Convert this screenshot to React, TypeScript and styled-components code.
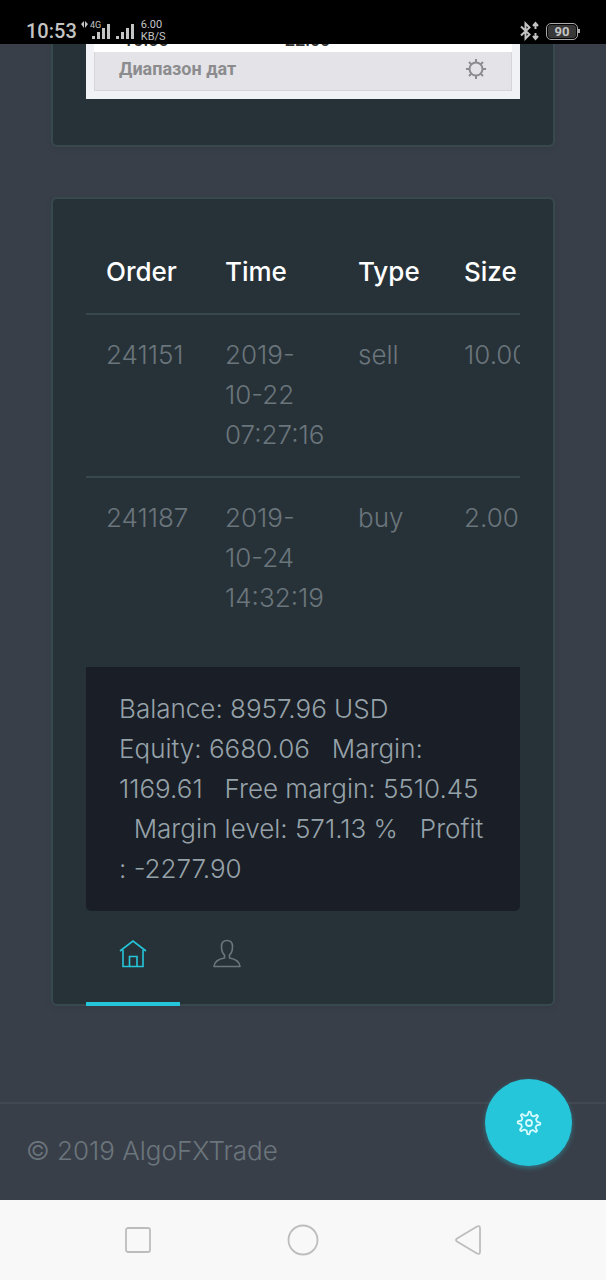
import React from "react";
import styled, { createGlobalStyle } from "styled-components";

const color = {
  page: "#393f49",
  card: "#273238",
  line: "#38494d",
  panel: "#1a1e26",
  accent: "#26c6da",
  muted: "#6b757c",
  soft: "#96a2a9",
};

const GlobalStyle = createGlobalStyle`
  *, *::before, *::after { box-sizing: border-box; }
  body {
    margin: 0;
    background: ${color.page};
    color: ${color.muted};
    font: 300 26px/40px Inter, "Liberation Sans", sans-serif;
  }
  button { border: 0; padding: 0; background: none; font: inherit; color: inherit; cursor: pointer; }
`;

const Screen = styled.div`
  display: flex;
  flex-direction: column;
  min-height: 100vh;
`;

const StatusBar = styled.header`
  display: flex;
  align-items: flex-end;
  justify-content: space-between;
  height: 44px;
  padding: 0 26px 1px;
  background: #000;
  color: #c4c4c4;
  font-family: Roboto, sans-serif;
  font-weight: 400;
`;

const StatusGroup = styled.div`
  display: flex;
  align-items: center;
  height: 24px;
`;

const Clock = styled.time`
  margin-right: 4px;
  font-size: 20px;
  line-height: 24px;
  font-weight: 500;
`;

const Speed = styled.span`
  display: flex;
  flex-direction: column;
  margin-left: 4px;
  font-size: 11px;
  line-height: 12px;
`;

const Battery = styled.span`
  display: flex;
  align-items: center;
  margin-left: 6px;

  &::after {
    content: "";
    width: 2px;
    height: 4px;
    background: #aaa;
  }
`;

const BatteryLevel = styled.span`
  width: 32px;
  height: 17px;
  border: 1px solid #aaa;
  border-radius: 5px;
  background: #383838;
  background-clip: content-box;
  padding: 1px;
  font-size: 13px;
  line-height: 13px;
  font-weight: 700;
  text-align: center;
`;

const Content = styled.main`
  display: flex;
  flex: 1;
  flex-direction: column;
  gap: 50px;
  padding: 0 51px 96px;
`;

const Card = styled.section<{ $continued?: boolean }>`
  padding: ${(p) => (p.$continued ? "0 33px 46px" : "33px 33px 0")};
  border: 2px solid ${color.line};
  border-top-width: ${(p) => (p.$continued ? "0" : "2px")};
  border-radius: ${(p) => (p.$continued ? "0 0 6px 6px" : "6px")};
  background: ${color.card};
  box-shadow: 0 2px 6px rgba(0, 0, 0, 0.08);
`;

const Widget = styled.div`
  padding: 0 8px 8px;
  background: #f0f2f6;
  font-family: Roboto, sans-serif;
`;

const TimeRow = styled.div`
  display: flex;
  align-items: flex-end;
  gap: 116px;
  height: 8px;
  padding: 0 0 3px 29px;
  overflow: hidden;
  background: #fff;
  color: #333;
  font-size: 18px;
  line-height: 18px;
  font-weight: 500;
`;

const RangeButton = styled.button`
  display: flex;
  align-items: center;
  justify-content: space-between;
  width: 100%;
  height: 39px;
  padding: 0 24px 4px;
  border: 1px solid #d6d6da;
  border-top: 0;
  background: #e4e4e8;
  color: #8c8c8f;
  font: 700 18px/24px Roboto, sans-serif;
`;

const TableClip = styled.div`
  overflow: hidden;
`;

const OrdersTable = styled.table`
  width: 466px;
  table-layout: fixed;
  border-spacing: 0;
  text-align: left;
`;

const Column = styled.col<{ $width: number }>`
  width: ${(p) => p.$width}px;
`;

const HeadCell = styled.th`
  padding: 20px 0 21px 20px;
  color: #fff;
  font-weight: 500;
`;

const Cell = styled.td`
  padding: 20px 0 21px 20px;
  border-top: 2px solid ${color.line};
  vertical-align: top;
`;

const Summary = styled.div`
  margin-top: 28px;
  padding: 22px 33px;
  border-radius: 0 0 5px 5px;
  background: ${color.panel};
  color: ${color.soft};
  white-space: pre;
`;

const Tabs = styled.nav`
  display: flex;
  margin-bottom: -2px;
`;

const Tab = styled.button<{ $active?: boolean }>`
  display: flex;
  justify-content: center;
  width: 94px;
  height: 95px;
  padding-top: 28px;
  border-bottom: 4px solid ${(p) => (p.$active ? color.accent : "transparent")};
  color: ${(p) => (p.$active ? color.accent : color.muted)};
`;

const Footer = styled.footer`
  position: relative;
  height: 98px;
  padding: 27px 26px;
  border-top: 2px solid #414852;
`;

const SettingsButton = styled.button`
  position: absolute;
  right: 34px;
  bottom: 34px;
  display: grid;
  place-items: center;
  width: 87px;
  height: 87px;
  border-radius: 50%;
  background: ${color.accent};
  color: #d5fbff;
  box-shadow: 0 2px 5px rgba(38, 198, 218, 0.4);
`;

const SystemNav = styled.nav`
  display: flex;
  align-items: center;
  justify-content: center;
  gap: 133px;
  height: 80px;
  background: #f8f8f8;
  color: #bdbdbd;
`;

const NavButton = styled.button`
  display: grid;
  place-items: center;
  width: 32px;
  height: 32px;
`;

const orders = [
  { id: "241151", time: ["2019-", "10-22", "07:27:16"], type: "sell", size: "10.00" },
  { id: "241187", time: ["2019-", "10-24", "14:32:19"], type: "buy", size: "2.00" },
];

const summary = [
  "Balance: 8957.96 USD",
  "Equity: 6680.06   Margin:",
  "1169.61   Free margin: 5510.45",
  "  Margin level: 571.13 %   Profit",
  ": -2277.90",
];

const cogPath = (() => {
  const teeth = 8;
  const points: string[] = [];
  for (let i = 0; i < teeth; i++) {
    [[-0.3, 8], [-0.1, 11.3], [0.1, 11.3], [0.3, 8]].forEach(([offset, radius]) => {
      const angle = ((i + offset) * 2 * Math.PI) / teeth + 0.06;
      points.push(`${(13 + radius * Math.sin(angle)).toFixed(2)} ${(13 - radius * Math.cos(angle)).toFixed(2)}`);
    });
  }
  return `M${points.join("L")}Z`;
})();

const SignalIcon = () => (
  <svg width="56" height="24" viewBox="0 0 56 24" fill="currentColor" aria-hidden="true">
    <path d="M0 5l3-3v7zM4 2l3 3-3 4z" />
    <path d="M11 17h3v3h-3zM16 13h3v7h-3zM21 9h3v11h-3zM26 5h3v15h-3z" />
    <path d="M35 17h3v3h-3zM40 13h3v7h-3zM45 9h3v11h-3zM50 5h3v15h-3z" />
    <text x="9" y="9" fontSize="9" fontFamily="Roboto">4G</text>
  </svg>
);

const BluetoothIcon = () => (
  <svg width="20" height="20" viewBox="0 0 20 20" fill="none" stroke="currentColor" strokeWidth="2" aria-hidden="true">
    <path d="M1 5.500l8.500 8L5.500 17.500v-15l4 4L1 14.500" />
    <path d="M15.500 2v6M13 5l2.500-3L18 5M15.500 12v6M13 15l2.500 3 2.500-3" />
  </svg>
);

const SunCogIcon = () => (
  <svg width="22" height="22" viewBox="0 0 22 22" fill="none" stroke="currentColor" strokeWidth="2" aria-hidden="true">
    <circle cx="11" cy="11" r="6.500" />
    <path d="M11 1v4M11 17v4M1 11h4M17 11h4M4 4l2.600 2.600M15.400 15.400L18 18M18 4l-2.600 2.600M6.600 15.400L4 18" />
  </svg>
);

const HomeIcon = () => (
  <svg width="28" height="30" viewBox="0 0 28 30" fill="none" stroke="currentColor" strokeWidth="1.600" aria-hidden="true">
    <path d="M1 12L14 2l13 10M4 11v16.500h20V11M10.500 27v-9.500h7.500V27" />
  </svg>
);

const UserIcon = () => (
  <svg width="28" height="30" viewBox="0 0 28 30" fill="none" stroke="currentColor" strokeWidth="1.600" strokeLinejoin="round" aria-hidden="true">
    <path d="M1 27.500h26c-0.500-4.500-4-7.500-10.500-8.500v-3c2-1.500 3-4 3-8.500C19.500 3.500 17.500 1.500 14 1.500S8.500 3.500 8.500 7.500C8.500 12 9.500 14.500 11.500 16v3C5 20 1.500 23 1 27.500z" />
  </svg>
);

const CogIcon = () => (
  <svg width="26" height="26" viewBox="0 0 26 26" fill="none" stroke="currentColor" strokeWidth="1.800" strokeLinejoin="round" aria-hidden="true">
    <path d={cogPath} />
    <circle cx="13" cy="13" r="3" />
  </svg>
);

export default function App() {
  return (
    <Screen>
      <GlobalStyle />
      <StatusBar>
        <StatusGroup>
          <Clock>10:53</Clock>
          <SignalIcon />
          <Speed>
            <span>6.00</span>
            <span>KB/S</span>
          </Speed>
        </StatusGroup>
        <StatusGroup>
          <BluetoothIcon />
          <Battery>
            <BatteryLevel>90</BatteryLevel>
          </Battery>
        </StatusGroup>
      </StatusBar>

      <Content>
        <Card $continued>
          <Widget>
            <TimeRow>
              <span>10:00</span>
              <span>22:00</span>
            </TimeRow>
            <RangeButton type="button">
              Диапазон дат
              <SunCogIcon />
            </RangeButton>
          </Widget>
        </Card>

        <Card>
          <TableClip>
            <OrdersTable>
              <colgroup>
                <Column $width={119} />
                <Column $width={133} />
                <Column $width={106} />
                <Column $width={108} />
              </colgroup>
              <thead>
                <tr>
                  <HeadCell>Order</HeadCell>
                  <HeadCell>Time</HeadCell>
                  <HeadCell>Type</HeadCell>
                  <HeadCell>Size</HeadCell>
                </tr>
              </thead>
              <tbody>
                {orders.map((order) => (
                  <tr key={order.id}>
                    <Cell>{order.id}</Cell>
                    <Cell>
                      {order.time.map((part) => (
                        <div key={part}>{part}</div>
                      ))}
                    </Cell>
                    <Cell>{order.type}</Cell>
                    <Cell>{order.size}</Cell>
                  </tr>
                ))}
              </tbody>
            </OrdersTable>
          </TableClip>
          <Summary>
            {summary.map((line) => (
              <div key={line}>{line}</div>
            ))}
          </Summary>
          <Tabs aria-label="Account">
            <Tab type="button" $active aria-label="Home">
              <HomeIcon />
            </Tab>
            <Tab type="button" aria-label="Profile">
              <UserIcon />
            </Tab>
          </Tabs>
        </Card>
      </Content>

      <Footer>
        © 2019 AlgoFXTrade
        <SettingsButton type="button" aria-label="Settings">
          <CogIcon />
        </SettingsButton>
      </Footer>

      <SystemNav aria-label="System">
        <NavButton type="button" aria-label="Recent apps">
          <svg width="26" height="26" viewBox="0 0 26 26" fill="none" stroke="currentColor" strokeWidth="1.800">
            <rect x="1" y="1" width="24" height="24" rx="2" />
          </svg>
        </NavButton>
        <NavButton type="button" aria-label="Home screen">
          <svg width="32" height="32" viewBox="0 0 32 32" fill="none" stroke="currentColor" strokeWidth="1.800">
            <circle cx="16" cy="16" r="14.500" />
          </svg>
        </NavButton>
        <NavButton type="button" aria-label="Back">
          <svg width="26" height="30" viewBox="0 0 26 30" fill="none" stroke="currentColor" strokeWidth="1.800" strokeLinejoin="round">
            <path d="M2 13.500L22 1.500Q25 0.500 25 3v24q0 2.500-3 1.500L2 16.500q-2-1.500 0-3z" />
          </svg>
        </NavButton>
      </SystemNav>
    </Screen>
  );
}
